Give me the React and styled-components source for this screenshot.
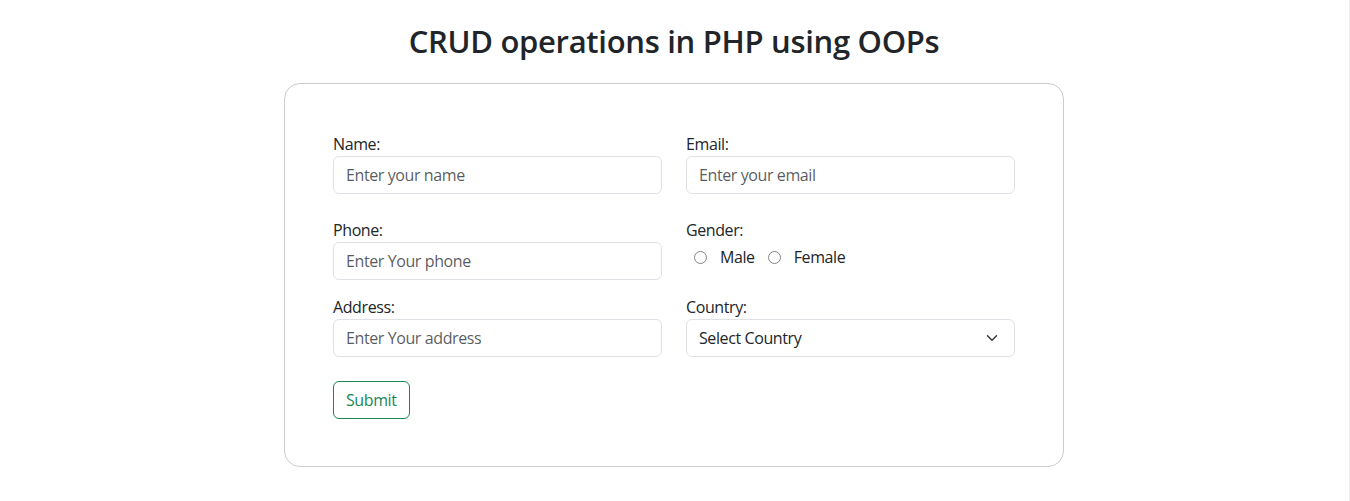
import React from "react";
import styled, { createGlobalStyle } from "styled-components";

const GlobalStyle = createGlobalStyle`
  html, body {
    margin: 0;
    padding: 0;
    background: #fff;
  }
  body {
    font-family: "Open Sans", "Noto Sans", sans-serif;
    font-size: 16px;
    line-height: 1.5;
    letter-spacing: -0.4px;
    color: #212529;
  }
  * {
    box-sizing: border-box;
  }
`;

const Page = styled.div`
  min-height: 501px;
  border-right: 1px solid #ededed;
  display: flex;
  flex-direction: column;
  align-items: center;
  padding: 22px 1px 0 0;
`;

const Title = styled.h2`
  margin: 0 0 23px;
  font-size: 31px;
  font-weight: 600;
  line-height: 38px;
  letter-spacing: -0.3px;
  color: #212529;
`;

const Card = styled.form`
  width: 780px;
  border: 1px solid #cbcbcb;
  border-radius: 16px;
  padding: 48px 48px 47px 48px;
`;

const Grid = styled.div`
  display: grid;
  grid-template-columns: 1fr 1fr;
  column-gap: 24px;
  margin-bottom: ${(p) => p.$gap}px;
`;

const Field = styled.div`
  display: flex;
  flex-direction: column;
`;

const Label = styled.label`
  display: block;
  line-height: 24px;
  color: #212529;
`;

const Input = styled.input`
  display: block;
  width: 100%;
  height: 38px;
  padding: 6px 12px;
  font: inherit;
  letter-spacing: inherit;
  color: #212529;
  background: #fff;
  border: 1px solid #dee2e6;
  border-radius: 6px;
  outline: none;

  &::placeholder {
    color: rgba(33, 37, 41, 0.75);
  }
`;

const SelectBox = styled.div`
  display: flex;
  align-items: center;
  justify-content: space-between;
  height: 38px;
  padding: 6px 14px 6px 12px;
  border: 1px solid #dee2e6;
  border-radius: 6px;
  color: #212529;
`;

const RadioRow = styled.div`
  display: flex;
  align-items: center;
  height: 24px;
  margin-top: 3px;
  padding-left: 8px;
`;

const Radio = styled.input`
  appearance: none;
  width: 13px;
  height: 13px;
  margin: 0 13px 0 0;
  border: 1px solid #858585;
  border-radius: 50%;
  background: #fff;
`;

const RadioLabel = styled.label`
  margin-right: 13px;
  color: #212529;
`;

const Button = styled.button`
  height: 38px;
  padding: 6px 12px;
  font: inherit;
  letter-spacing: inherit;
  color: #198754;
  background: transparent;
  border: 1px solid #198754;
  border-radius: 6px;
  cursor: pointer;
`;

const Chevron = () => (
  <svg width="16" height="12" viewBox="0 0 16 16" fill="none">
    <path d="m2 5 6 6 6-6" stroke="#343a40" strokeWidth="2" strokeLinecap="round" strokeLinejoin="round" />
  </svg>
);

export default function App() {
  return (
    <>
      <GlobalStyle />
      <Page>
        <Title>CRUD operations in PHP using OOPs</Title>
        <Card onSubmit={(e) => e.preventDefault()}>
          <Grid $gap={24}>
            <Field>
              <Label>Name:</Label>
              <Input type="text" placeholder="Enter your name" />
            </Field>
            <Field>
              <Label>Email:</Label>
              <Input type="email" placeholder="Enter your email" />
            </Field>
          </Grid>
          <Grid $gap={15}>
            <Field>
              <Label>Phone:</Label>
              <Input type="text" placeholder="Enter Your phone" />
            </Field>
            <Field>
              <Label>Gender:</Label>
              <RadioRow>
                <Radio type="radio" name="gender" id="male" />
                <RadioLabel htmlFor="male">Male</RadioLabel>
                <Radio type="radio" name="gender" id="female" />
                <RadioLabel htmlFor="female">Female</RadioLabel>
              </RadioRow>
            </Field>
          </Grid>
          <Grid $gap={24}>
            <Field>
              <Label>Address:</Label>
              <Input type="text" placeholder="Enter Your address" />
            </Field>
            <Field>
              <Label>Country:</Label>
              <SelectBox>
                <span>Select Country</span>
                <Chevron />
              </SelectBox>
            </Field>
          </Grid>
          <Button type="submit">Submit</Button>
        </Card>
      </Page>
    </>
  );
}
